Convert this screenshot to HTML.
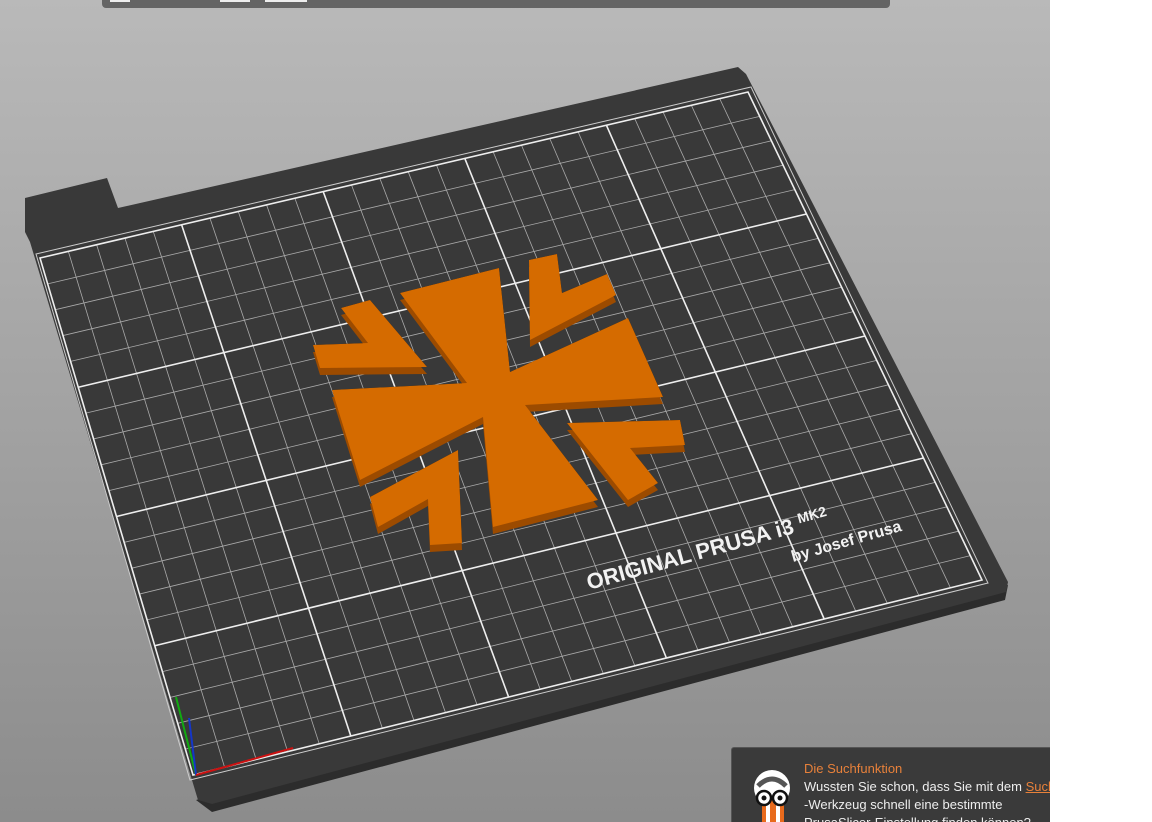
<!DOCTYPE html>
<html><head><meta charset="utf-8"><style>
html,body{margin:0;padding:0;width:1152px;height:822px;overflow:hidden;background:#fff;font-family:"Liberation Sans",sans-serif}
#vp{position:absolute;left:0;top:0;width:1050px;height:822px;overflow:hidden;background:linear-gradient(#b9b9b9,#8c8c8c)}
#tb{position:absolute;left:102px;top:0;width:788px;height:8px;background:#646464;border-radius:0 0 4px 4px}
#tb i{position:absolute;top:0;height:2px;background:#eee}
#note{position:absolute;left:731px;top:747px;width:340px;height:90px;background:#3a3a3a;border:1px solid #555;border-radius:3px;color:#eee;font-size:13px;line-height:18px}
#note .t{position:absolute;left:72px;top:12px;white-space:nowrap}
</style></head><body>
<div id="vp">
<svg width="1050" height="822" style="position:absolute;left:0;top:0">
<polygon points="196,800 1008,585 1005,600 212,812" fill="#2c2c2c"/>
<polygon points="25,198 107,178 118,208 738,67 746,74 1008,582 1006,592 212,804 198,800 30,242 25,232" fill="#393939"/>
<g id="grid" stroke="#aaa" stroke-width="0.8" fill="none"></g>
<g id="major" stroke="#eee" stroke-width="1.6" fill="none"></g>
<polygon points="40,258 748,92 982,580 193,775" fill="none" stroke="#eee" stroke-width="1.6"/>
<polygon points="36,254 751,87 988,583 190,780" fill="none" stroke="#ccc" stroke-width="1"/>
<g id="logo">
<polygon points="400,293 499,268 510,372 628,318 663,397 525,405 598,500 493,527 483,417 360,480 332,390 467,383"/>
<polygon points="341,308 370,300 427,367 320,368 313,345 368,343"/>
<polygon points="529,260 557,254 562,293 607,274 616,295 530,340"/>
<polygon points="567,423 680,420 685,445 630,448 658,483 628,500"/>
<polygon points="370,497 458,450 462,543 430,545 428,499 378,527"/>
</g>
<use href="#logo" fill="#9c4b00" transform="translate(0,7)"/>
<use href="#logo" fill="#d56b00"/>
<text x="0" y="0" fill="#f2f2f2" font-size="22" font-weight="bold" transform="translate(589,590) rotate(-15.5)">ORIGINAL PRUSA i3 <tspan font-size="14" dy="-8">MK2</tspan></text>
<text x="0" y="0" fill="#f2f2f2" font-size="16" font-weight="bold" transform="translate(793,562) rotate(-16)">by Josef Prusa</text>
<line x1="196" y1="775" x2="176" y2="697" stroke="#1a1" stroke-width="2"/>
<line x1="196" y1="775" x2="189" y2="718" stroke="#1436c8" stroke-width="2"/>
<line x1="196" y1="775" x2="293" y2="748" stroke="#c11" stroke-width="2"/>
</svg>
<div id="tb"><i style="left:8px;width:20px"></i><i style="left:118px;width:30px"></i><i style="left:163px;width:42px"></i></div>
<div id="note">
<svg width="60" height="80" style="position:absolute;left:12px;top:18px"><circle cx="28" cy="22" r="18" fill="#fff"/><path d="M14 20 Q28 6 42 20" stroke="#555" stroke-width="5" fill="none"/><rect x="18" y="30" width="22" height="50" fill="#e86a1c"/><rect x="22" y="34" width="4" height="46" fill="#fff"/><rect x="32" y="34" width="4" height="46" fill="#fff"/><circle cx="20" cy="32" r="7" fill="#fff" stroke="#111" stroke-width="2.5"/><circle cx="36" cy="32" r="7" fill="#fff" stroke="#111" stroke-width="2.5"/><circle cx="20" cy="32" r="2.5" fill="#111"/><circle cx="36" cy="32" r="2.5" fill="#111"/></svg>
<div class="t"><span style="color:#e8813a">Die Suchfunktion</span><br>Wussten Sie schon, dass Sie mit dem <span style="color:#e8813a;text-decoration:underline">Suchen</span><br>-Werkzeug schnell eine bestimmte<br>PrusaSlicer-Einstellung finden können?</div>
</div>
</div>
<script>
var TL=[40,258],TR=[748,92],BR=[982,580],BL=[193,775];
function P(u,v){return [(1-u)*(1-v)*TL[0]+u*(1-v)*TR[0]+u*v*BR[0]+(1-u)*v*BL[0],(1-u)*(1-v)*TL[1]+u*(1-v)*TR[1]+u*v*BR[1]+(1-u)*v*BL[1]];}
function L(g,a,b){var l=document.createElementNS("http://www.w3.org/2000/svg","line");l.setAttribute("x1",a[0]);l.setAttribute("y1",a[1]);l.setAttribute("x2",b[0]);l.setAttribute("y2",b[1]);g.appendChild(l);}
var g=document.getElementById("grid"),m=document.getElementById("major");
for(var i=1;i<25;i++){var u=i/25;L(i%5?g:m,P(u,0),P(u,1));}
for(var j=1;j<20;j++){var v=j/20;L(j%5?g:m,P(0,v),P(1,v));}
</script>
</body></html>
